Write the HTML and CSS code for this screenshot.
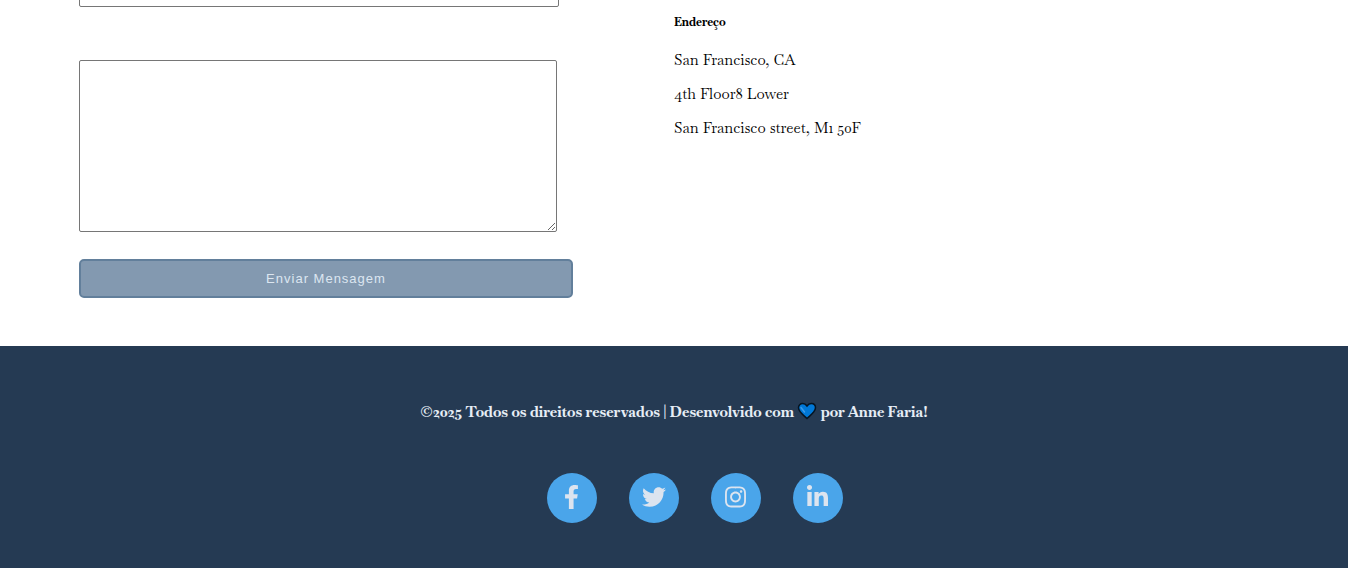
FILE: index.html
```html
<!DOCTYPE html>
<html lang="pt-BR">
<head>
<meta charset="utf-8">
<meta name="viewport" content="width=device-width, initial-scale=1">
<title>Contato</title>
<link rel="stylesheet" href="styles.css">
</head>
<body>
<main class="contact">
  <form class="contact-form">
    <input class="field" type="text" name="assunto" aria-label="Assunto">
    <textarea class="message" name="mensagem" aria-label="Mensagem"></textarea>
    <button class="send" type="submit">Enviar Mensagem</button>
  </form>
  <address class="info">
    <h5 class="info-title">Endereço</h5>
    <p class="info-line">San Francisco, CA</p>
    <p class="info-line">4th Floor8 Lower</p>
    <p class="info-line">San Francisco street, M1 50F</p>
  </address>
</main>
<footer class="footer">
  <p class="copyright">©2025 Todos os direitos reservados | Desenvolvido com
    <svg class="heart" viewBox="0 0 20 18" role="img" aria-label="coração azul"><path d="M10 16.5C7 13.500 1.500 10 1.500 5.800C1.500 3.200 3.300 1.500 5.700 1.500C7.500 1.500 9 2.500 10 4C11 2.500 12.500 1.500 14.300 1.500C16.700 1.500 18.500 3.200 18.500 5.800C18.500 10 13 13.500 10 16.500Z" fill="#0078d7" stroke="#061421" stroke-width="1.500"/><path d="M4 5.500L7.500 10" stroke="#3d9bea" stroke-width="1.500" stroke-linecap="round"/></svg>
    por Anne Faria!</p>
  <ul class="social">
    <li><a class="social-link" href="#" aria-label="Facebook"><svg class="icon" viewBox="0 0 320 512"><path d="M279.14 288l14.22-92.66h-88.91v-60.13c0-25.35 12.42-50.06 52.24-50.06h40.42V6.26S260.43 0 225.36 0c-73.22 0-121.08 44.38-121.08 124.72v70.62H22.89V288h81.39v224h100.17V288z"/></svg></a></li>
    <li><a class="social-link" href="#" aria-label="Twitter"><svg class="icon" viewBox="0 0 512 512"><path d="M459.37 151.716c.325 4.548.325 9.097.325 13.645 0 138.72-105.583 298.558-298.558 298.558-59.452 0-114.68-17.219-161.137-47.106 8.447.974 16.568 1.299 25.34 1.299 49.055 0 94.213-16.568 130.274-44.832-46.132-.975-84.792-31.188-98.112-72.772 6.498.974 12.995 1.624 19.818 1.624 9.421 0 18.843-1.300 27.614-3.573-48.081-9.747-84.143-51.980-84.143-102.985v-1.299c13.969 7.797 30.214 12.670 47.431 13.319-28.264-18.843-46.781-51.005-46.781-87.391 0-19.492 5.197-37.360 14.294-52.954 51.655 63.675 129.300 105.258 216.365 109.807-1.624-7.797-2.599-15.918-2.599-24.040 0-57.828 46.782-104.934 104.934-104.934 30.213 0 57.502 12.670 76.670 33.137 23.715-4.548 46.456-13.320 66.599-25.340-7.798 24.366-24.366 44.833-46.132 57.827 21.117-2.273 41.584-8.122 60.426-16.243-14.292 20.791-32.161 39.308-52.628 54.253z"/></svg></a></li>
    <li><a class="social-link" href="#" aria-label="Instagram"><svg class="icon" viewBox="0 0 448 512"><path d="M224.100 141c-63.600 0-114.900 51.300-114.900 114.900s51.300 114.900 114.900 114.900S339 319.500 339 255.900 287.700 141 224.100 141zm0 189.600c-41.100 0-74.700-33.500-74.700-74.700s33.500-74.700 74.700-74.700 74.700 33.500 74.700 74.700-33.600 74.700-74.700 74.700zm146.400-194.300c0 14.900-12 26.800-26.800 26.800-14.900 0-26.800-12-26.800-26.800s12-26.800 26.800-26.800 26.800 12 26.800 26.800zm76.100 27.200c-1.700-35.900-9.900-67.700-36.200-93.900-26.200-26.200-58-34.400-93.900-36.200-37-2.100-147.900-2.100-184.900 0-35.800 1.700-67.600 9.900-93.900 36.100s-34.400 58-36.200 93.900c-2.100 37-2.100 147.900 0 184.900 1.700 35.900 9.900 67.700 36.200 93.900s58 34.400 93.900 36.200c37 2.100 147.900 2.100 184.900 0 35.900-1.700 67.700-9.900 93.900-36.200 26.200-26.200 34.400-58 36.200-93.900 2.100-37 2.100-147.800 0-184.800zM398.800 388c-7.800 19.600-22.900 34.700-42.600 42.600-29.500 11.700-99.500 9-132.100 9s-102.700 2.600-132.100-9c-19.600-7.800-34.700-22.900-42.600-42.600-11.700-29.500-9-99.500-9-132.100s-2.600-102.700 9-132.100c7.800-19.600 22.900-34.700 42.600-42.600 29.500-11.700 99.500-9 132.100-9s102.700-2.600 132.100 9c19.600 7.800 34.700 22.900 42.600 42.600 11.700 29.500 9 99.500 9 132.100s2.700 102.700-9 132.100z"/></svg></a></li>
    <li><a class="social-link" href="#" aria-label="LinkedIn"><svg class="icon" viewBox="0 0 448 512"><path d="M100.280 448H7.400V148.900h92.880zM53.790 108.100C24.090 108.100 0 83.500 0 53.800a53.790 53.790 0 0 1 107.580 0c0 29.700-24.100 54.300-53.790 54.300zM447.900 448h-92.680V302.400c0-34.700-.7-79.200-48.290-79.200-48.290 0-55.690 37.700-55.690 76.700V448h-92.780V148.900h89.080v40.800h1.300c12.400-23.500 42.690-48.300 87.880-48.300 94 0 111.280 61.900 111.280 142.300V448z"/></svg></a></li>
  </ul>
</footer>
</body>
</html>
```
FILE: styles.css
```css
* {
  box-sizing: border-box;
}

body {
  margin: 0;
  min-height: 100vh;
  display: flex;
  flex-direction: column;
  overflow-x: hidden;
  font-family: Baskervville, "Liberation Serif", serif;
  font-size: 15px;
  color: #000;
  background: #fff;
}

.contact {
  display: grid;
  grid-template-columns: 1fr 1fr;
  margin-top: -33px;
  padding-bottom: 48px;
}

.contact-form {
  display: flex;
  flex-direction: column;
  align-items: flex-start;
  padding: 0 101px 0 79px;
}

.field,
.message {
  border: 1px solid #767676;
  border-radius: 2px;
  background: #fff;
}

.field {
  width: calc(100% - 14px);
  height: 40px;
}

.message {
  width: calc(100% - 16px);
  height: 172px;
  margin: 53px 0 27px;
  resize: both;
}

.send {
  width: 100%;
  padding: 10px;
  border: 2px solid #627f9b;
  border-radius: 5px;
  background: #8399b0;
  color: #dce6f0;
  font: 500 13px/15px "Liberation Sans", sans-serif;
  letter-spacing: 1px;
  text-align: center;
}

.info {
  padding-top: 47px;
  font-style: normal;
}

.info-title {
  margin: 0 0 20px;
  font-size: 12px;
  line-height: 16px;
}

.info-line {
  margin: 0 0 14px;
  line-height: 20px;
}

.footer {
  flex: 1;
  padding: 54px 0 45px;
  background: #253a53;
}

.copyright {
  margin: 0;
  color: #e6edf5;
  font-weight: 700;
  line-height: 24px;
  text-align: center;
}

.heart {
  width: 20px;
  height: 18px;
  vertical-align: -3px;
  fill: none;
}

.social {
  display: flex;
  justify-content: center;
  gap: 32px;
  margin: 49px 0 0;
  padding: 0 0 0 42px;
  list-style: none;
}

.social-link {
  display: flex;
  align-items: center;
  justify-content: center;
  width: 50px;
  height: 50px;
  padding: 0 1px 2px 0;
  border-radius: 50%;
  background: #4aa5ea;
}

.icon {
  height: 24px;
  fill: #dce4ef;
}
```
